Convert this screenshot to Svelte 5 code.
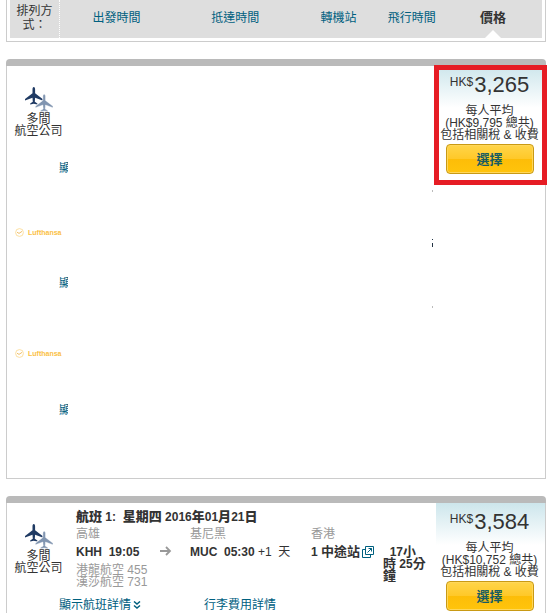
<script lang="ts">
	const sortOptions = ['出發時間', '抵達時間', '轉機站', '飛行時間', '價格'];
	const activeSort = '價格';

	const flight = {
		title: '航班 1:\u00a0 星期四 2016年01月21日',
		from: { city: '高雄', code: 'KHH', time: '19:05' },
		to: { city: '基尼黑', code: 'MUC', time: '05:30' },
		carriers: ['港龍航空 455', '漢莎航空 731'],
		via: '香港',
		stops: '1 中途站',
		duration: '\u00a0 17小時 25分鐘'
	};

	// Separate latin and chinese runs, bold chinese is set a bit larger
	function runs(text: string) {
		return text.match(/[\u4e00-\u9fff]+|[^\u4e00-\u9fff]+/g) ?? [];
	}

	function isChinese(text: string) {
		return /[\u4e00-\u9fff]/.test(text);
	}
</script>

{#snippet bold(text: string)}
	{#each runs(text) as run}<b class:zh={isChinese(run)}>{run}</b>{/each}
{/snippet}

{#snippet multiAirline()}
	<div class="airline">
		<svg class="planes" viewBox="0 0 28 25" aria-hidden="true">
			<path
				fill="#1f3a63"
				d="M8.800 0c.9 0 1.300 1.200 1.300 2.400v3.800l7.500 5.800v1.500L10.100 10.800l-.3 4 2.600 1.600v1.100L8.800 16.700l-3.600.8v-1.100l2.600-1.600-.3-4L0 13.500V12l7.500-5.800V2.400C7.500 1.200 7.900 0 8.800 0z"
			/>
			<path
				fill="#8195b0"
				stroke="#fff"
				stroke-width="0.4"
				d="M19.200 7.200c.9 0 1.300 1.200 1.300 2.400v3.800l7.500 5.800v1.500L20.500 18l-.3 4 2.600 1.600v1.100l-3.600-.8-3.600.8v-1.100l2.600-1.600-.3-4-7.500 2.700v-1.500l7.500-5.800V9.600c0-1.200.4-2.400 1.300-2.400z"
			/>
		</svg>
		<span>多間<br />航空公司</span>
	</div>
{/snippet}

{#snippet lufthansa()}
	<div class="lufthansa">
		<svg viewBox="0 0 9 9" aria-hidden="true">
			<circle cx="4.5" cy="4.5" r="3.9" fill="none" stroke="#fbd88c" stroke-width="0.8" />
			<path d="M2 4.200l2 1.200 3-2" fill="none" stroke="#edb85a" stroke-width="0.9" />
		</svg>
		<span>Lufthansa</span>
	</div>
{/snippet}

{#snippet price(amount: string, total: string)}
	<div class="price">
		<div class="amount"><span class="currency">HK$</span>{amount}</div>
		<p>每人平均<br />(HK${total} 總共)<br />包括相關稅 &amp; 收費</p>
		<button type="button">選擇</button>
	</div>
{/snippet}

<main>
	<nav class="sort-bar">
		<span class="sort-label">排列方<br />式：</span>
		{#each sortOptions as option}
			<a href="#sort" class:active={option === activeSort}>{option}</a>
		{/each}
	</nav>

	<section class="card">
		<div class="card-body">
			<div class="legs">
				<div class="leg">{@render multiAirline()}</div>
				<div class="leg-links"><a class="clipped" href="#details">顯</a></div>
				<div class="leg single">{@render lufthansa()}</div>
				<div class="leg-links"><a class="clipped" href="#details">顯</a></div>
				<div class="leg single tall">{@render lufthansa()}</div>
				<div class="leg-links last"><a class="clipped" href="#details">顯</a></div>
			</div>
			<div class="ticks">
				<i></i>
				<i class="dark"></i>
				<i></i>
			</div>
			{@render price('3,265', '9,795')}
			<div class="highlight"></div>
		</div>
	</section>

	<section class="card open">
		<div class="card-body">
			<div class="legs">
				<div class="leg">
					{@render multiAirline()}
					<div class="details">
						<h3>{@render bold(flight.title)}</h3>
						<div class="segment">
							<span class="muted">{flight.from.city}</span>
							<span></span>
							<span class="muted">{flight.to.city}</span>
							<span class="muted">{flight.via}</span>
							<span></span>

							<b>{flight.from.code}&nbsp; {flight.from.time}</b>
							<svg class="arrow" viewBox="0 0 12 10" aria-hidden="true">
								<path d="M0 5h10M6 1l4 4-4 4" fill="none" stroke="#999" stroke-width="1.800" />
							</svg>
							<span><b>{flight.to.code}&nbsp; {flight.to.time}</b> +1&nbsp; 天</span>
							<span class="stops">
								{@render bold(flight.stops)}
								<svg viewBox="0 0 12 12" aria-hidden="true">
									<path
										d="M3.500.5h8v8h-8zM3.500 3.500h-3v8h8v-3M5.500 6.500l4-4M6.500 2.500h3v3"
										fill="none"
										stroke="#00607f"
									/>
								</svg>
							</span>
							<span class="duration">{@render bold(flight.duration)}</span>

							<span class="muted carriers">
								{#each flight.carriers as carrier}
									<span>{carrier}</span>
								{/each}
							</span>
						</div>
					</div>
				</div>
				<div class="leg-links">
					<a href="#details">
						顯示航班詳情<svg viewBox="0 0 8 8" aria-hidden="true">
							<path d="M1 .5l3 2.500 3-2.500M1 4.500L4 7l3-2.500" fill="none" stroke="#00607f" stroke-width="1.500" />
						</svg>
					</a>
					<a href="#baggage">行李費用詳情</a>
				</div>
			</div>
			{@render price('3,584', '10,752')}
		</div>
	</section>
</main>

<style>
	:global(body) {
		background: #fff;
		overflow: hidden;
	}

	main {
		padding: 0 3px 0 6px;
		font: 12px/12px 'Liberation Sans', 'Noto Sans CJK TC', sans-serif;
		color: #333;
	}

	a {
		color: #00607f;
		text-decoration: none;
	}

	.zh {
		font-size: 13px;
	}

	.sort-bar {
		display: grid;
		grid-template-columns: 50px 113fr 124fr 82fr 64fr 98fr;
		height: 38px;
		padding: 0 3px 3px;
		border: 1px solid #ccc;
		border-top: 0;
		background: #dedede content-box;
		text-align: center;
	}

	.sort-label {
		padding-top: 4px;
		line-height: 14px;
		border-right: 1px dotted #fff;
	}

	.sort-bar a {
		position: relative;
		line-height: 36px;
	}

	.sort-bar .active {
		color: #333;
		font-size: 13px;
		font-weight: bold;
	}

	.active::after {
		content: '';
		position: absolute;
		left: 50%;
		bottom: 0;
		margin-left: -8px;
		border: 8px solid transparent;
		border-top: 0;
		border-bottom-color: #fff;
	}

	.card {
		margin-top: 17px;
		border-top: 7px solid #bababa;
		border-radius: 4px 4px 0 0;
	}

	.card-body {
		display: flex;
		position: relative;
		border: 1px solid #ccc;
		border-top: 0;
	}

	.open .card-body {
		padding-bottom: 12px;
	}

	.legs {
		flex: 1;
		min-width: 0;
	}

	.leg {
		display: flex;
		min-height: 96px;
	}

	.leg.single {
		align-items: center;
		min-height: 103px;
		padding-top: 14px;
		box-sizing: border-box;
	}

	.leg.single.tall {
		min-height: 115px;
	}

	.airline {
		flex: 0 0 63px;
		padding-top: 21px;
		text-align: center;
	}

	.planes {
		display: block;
		width: 28px;
		height: 25px;
		margin: 0 auto 1px;
	}

	.lufthansa {
		display: flex;
		align-items: center;
		gap: 4px;
		padding-left: 8px;
		color: #fbbf45;
		font-size: 7px;
		font-weight: bold;
	}

	.lufthansa svg {
		width: 9px;
		height: 9px;
	}

	.leg-links {
		display: flex;
		padding-left: 52px;
		white-space: nowrap;
	}

	.leg-links.last {
		padding-bottom: 62px;
	}

	.leg-links a:first-child {
		width: 145px;
	}

	.leg-links a.clipped {
		width: 9px;
		overflow: hidden;
	}

	.leg-links svg {
		width: 8px;
		height: 8px;
		margin-left: 2px;
	}

	.ticks {
		display: flex;
		flex-direction: column;
		gap: 47px;
		width: 4px;
		padding-top: 124px;
	}

	.ticks i {
		width: 1px;
		height: 2px;
		background: #bbb;
	}

	.ticks .dark {
		height: 8px;
		background: linear-gradient(#234 1px, #fff 1px 4px, #234 4px);
	}

	.ticks i:last-child {
		margin-top: 12px;
	}

	.details {
		flex: 1;
		padding: 8px 0 0 6px;
	}

	h3 {
		margin: 0 0 5px;
		font-size: 12px;
		line-height: 12px;
	}

	.segment {
		display: grid;
		grid-template-columns: 84px 30px 121px 72px 45px;
		grid-template-rows: 12px 12px auto;
		row-gap: 6px;
		white-space: nowrap;
	}

	.muted {
		color: #999;
	}

	.arrow {
		width: 12px;
		height: 10px;
	}

	.stops {
		display: flex;
		white-space: pre;
	}

	.stops svg {
		width: 12px;
		height: 12px;
		margin-left: 2px;
	}

	.duration {
		white-space: normal;
	}

	.carriers span {
		display: block;
	}

	.price {
		flex: 0 0 107px;
		padding-right: 2px;
		text-align: center;
		background: linear-gradient(#cde6ec, #fff 42px);
	}

	.amount {
		display: flex;
		justify-content: center;
		gap: 1px;
		padding-top: 7px;
		font-size: 22px;
		line-height: 24px;
	}

	.currency {
		font-size: 12px;
		line-height: 18px;
	}

	.price p {
		margin: 8px 0 3px;
		white-space: nowrap;
	}

	button {
		width: 88px;
		height: 30px;
		padding: 0 0 2px;
		border: 1px solid #c99a14;
		border-radius: 4px;
		background: linear-gradient(#ffd54a, #ffc828 50%, #fdbd08 50%, #ffc40c);
		box-shadow: inset 0 0 0 1px #ffd75a;
		color: #175c62;
		font: bold 13px 'Liberation Sans', 'Noto Sans CJK TC', sans-serif;
	}

	/* frame around the cheapest fare */
	.highlight {
		position: absolute;
		top: -1px;
		right: -2px;
		width: 103px;
		height: 110px;
		border: 5px solid #e61c24;
	}
</style>
